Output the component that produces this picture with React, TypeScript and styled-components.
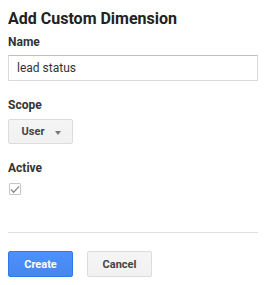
import React from 'react'
import styled, { createGlobalStyle } from 'styled-components'

const GlobalStyle = createGlobalStyle`
  html, body {
    margin: 0;
    padding: 0;
    background: #fff;
    font-family: Roboto, "Liberation Sans", Arial, sans-serif;
  }
`

const Panel = styled.div`
  width: 250px;
  padding: 8px 11px 8px 8px;
  display: flex;
  flex-direction: column;
`

const Title = styled.h1`
  margin: 0;
  font-size: 16px;
  line-height: 21px;
  font-weight: 700;
  color: #222;
`

const Label = styled.label<{ $top: number }>`
  display: block;
  margin-top: ${(p) => p.$top}px;
  font-size: 12px;
  line-height: 16px;
  font-weight: 700;
  color: #333;
`

const TextInput = styled.input`
  box-sizing: border-box;
  width: 250px;
  height: 26px;
  margin-top: 5px;
  padding: 0 8px;
  border: 1px solid #d9d9d9;
  border-top-color: #c0c0c0;
  border-radius: 1px;
  font-family: inherit;
  font-size: 12px;
  color: #333;
  outline: none;
`

const GrayButton = styled.button<{ $primary?: boolean }>`
  box-sizing: border-box;
  width: 65px;
  height: 26px;
  display: inline-flex;
  align-items: center;
  justify-content: center;
  gap: 11px;
  border-radius: 2px;
  font-family: inherit;
  font-size: 11px;
  font-weight: 700;
  padding: 0;
  cursor: pointer;
  color: ${(p) => (p.$primary ? '#fff' : '#444')};
  background: ${(p) =>
    p.$primary ? 'linear-gradient(#4d90fe, #4787ed)' : 'linear-gradient(#f5f5f5, #f1f1f1)'};
  border: 1px solid ${(p) => (p.$primary ? '#3079ed' : '#dcdcdc')};
`

const Dropdown = styled(GrayButton)`
  height: 25px;
  margin-top: 6px;
  padding-left: 2px;
`

const Arrow = styled.span`
  width: 0;
  height: 0;
  margin-top: 2px;
  border-left: 3px solid transparent;
  border-right: 3px solid transparent;
  border-top: 4px solid #777;
`

const CheckBox = styled.span`
  box-sizing: border-box;
  display: flex;
  align-items: center;
  justify-content: center;
  width: 12px;
  height: 12px;
  margin: 7px 0 0 1px;
  border: 1px solid #c6c6c6;
  border-radius: 1px;
  background: #fff;
`

const Divider = styled.hr`
  width: 250px;
  margin: 37px 0 0;
  border: none;
  border-top: 1px solid #e0e0e0;
`

const Actions = styled.div`
  display: flex;
  gap: 14px;
  margin-top: 18px;
`

export default function App() {
  return (
    <>
      <GlobalStyle />
      <Panel>
        <Title>Add Custom Dimension</Title>

        <Label $top={5}>Name</Label>
        <TextInput defaultValue="lead status" />

        <Label $top={16}>Scope</Label>
        <div>
          <Dropdown>
            User
            <Arrow />
          </Dropdown>
        </div>

        <Label $top={16}>Active</Label>
        <CheckBox>
          <svg width="11" height="9" viewBox="0 0 11 9">
            <path d="M1 4.5 L4 7.5 L10 1" fill="none" stroke="#8a8a8a" strokeWidth="1.4" />
          </svg>
        </CheckBox>

        <Divider />

        <Actions>
          <GrayButton $primary>Create</GrayButton>
          <GrayButton>Cancel</GrayButton>
        </Actions>
      </Panel>
    </>
  )
}
